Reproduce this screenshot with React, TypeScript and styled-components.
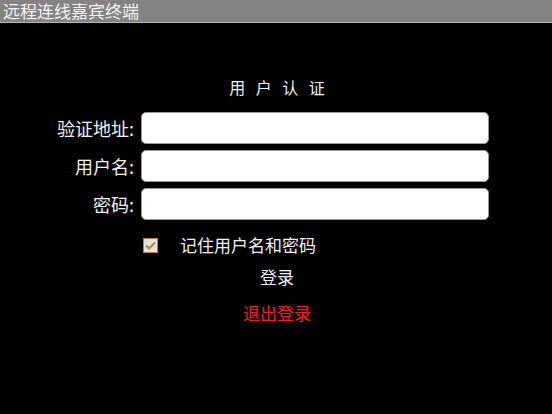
import React from "react";
import styled, { createGlobalStyle } from "styled-components";

const Global = createGlobalStyle`
  html, body { margin: 0; padding: 0; background: #000; }
  body { font-family: "Microsoft YaHei", "Noto Sans CJK SC", "Noto Sans", sans-serif; }
  * { box-sizing: border-box; }
`;

const Page = styled.div`
  width: 552px;
  height: 414px;
  background: #000;
  display: flex;
  flex-direction: column;
  overflow: hidden;
`;

const TitleBar = styled.div`
  height: 23px;
  background: #838383;
  border-bottom: 1px solid #b4b4b4;
  color: #f2f2f2;
  font-size: 17px;
  line-height: 1;
  display: flex;
  align-items: center;
  padding-left: 3px;
  padding-bottom: 1px;
  white-space: nowrap;
`;

const Body = styled.div`
  display: flex;
  flex-direction: column;
  align-items: center;
  padding-top: 54px;
`;

const Heading = styled.div`
  color: #f0f0f0;
  font-size: 16px;
  line-height: 20px;
  letter-spacing: 10.5px;
  padding-left: 10.5px;
  margin-left: 2px;
`;

const Form = styled.div`
  display: grid;
  grid-template-columns: 139px 348px;
  column-gap: 2px;
  row-gap: 6px;
  align-self: flex-start;
  margin-top: 15px;
  width: 489px;
`;

const Label = styled.label`
  color: #f0f0f0;
  font-size: 18px;
  text-align: right;
  line-height: 32px;
  padding-right: 5px;
`;

const Input = styled.input`
  height: 32px;
  border: 1px solid #9a9a9a;
  border-radius: 5px;
  background: #fff;
  outline: none;
  font-size: 16px;
  padding: 0 6px;
`;

const RememberRow = styled.div`
  display: flex;
  align-items: center;
  align-self: flex-start;
  margin-left: 143px;
  margin-top: 15px;
  gap: 22px;
  color: #f0f0f0;
  font-size: 17px;
  line-height: 20px;
`;

const Box = styled.span`
  width: 15px;
  height: 15px;
  border: 1px solid #c8773a;
  background: #e4e4e4;
  display: flex;
  align-items: center;
  justify-content: center;
`;

const Action = styled.div<{ $color: string; $mt: number }>`
  color: ${(p) => p.$color};
  font-size: 17px;
  line-height: 20px;
  margin-top: ${(p) => p.$mt}px;
  margin-left: 2px;
`;

export default function App() {
  return (
    <>
      <Global />
      <Page>
        <TitleBar>远程连线嘉宾终端</TitleBar>
        <Body>
          <Heading>用户认证</Heading>
          <Form>
            <Label>验证地址:</Label>
            <Input />
            <Label>用户名:</Label>
            <Input />
            <Label>密码:</Label>
            <Input type="password" />
          </Form>
          <RememberRow>
            <Box>
              <svg width="11" height="9" viewBox="0 0 11 9">
                <path d="M1 4.5 L4 7.5 L10 1.5" fill="none" stroke="#d0782f" strokeWidth="2" />
              </svg>
            </Box>
            <span>记住用户名和密码</span>
          </RememberRow>
          <Action $color="#f0f0f0" $mt={12}>登录</Action>
          <Action $color="#ff1a1a" $mt={16}>退出登录</Action>
        </Body>
      </Page>
    </>
  );
}
